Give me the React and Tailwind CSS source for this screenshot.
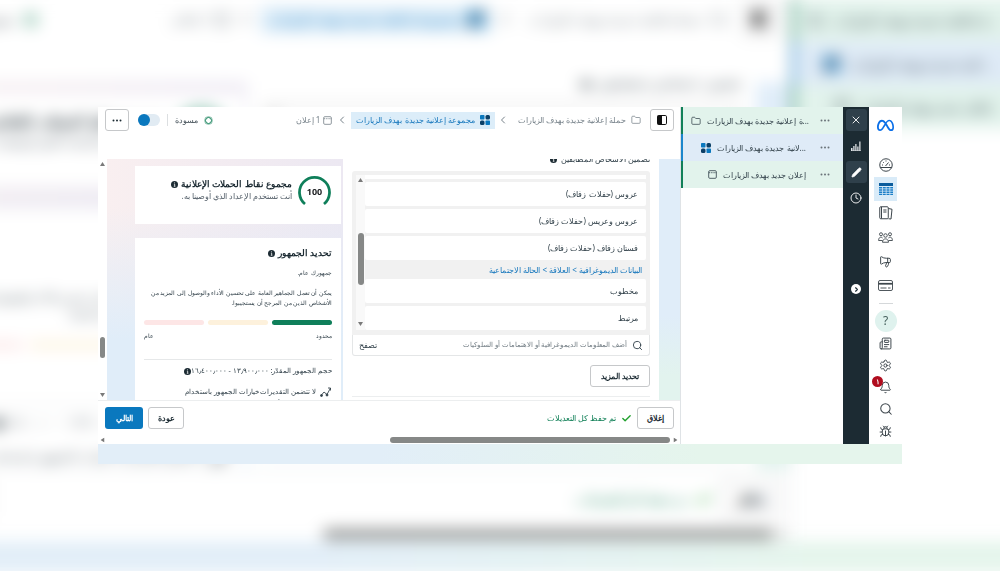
import { useId } from 'react'
import {
  Bell, Bug, Check, ChevronLeft, ChevronRight, Clock, CircleHelp, Folder,
  Megaphone, Newspaper, Pencil, Search, Settings, X,
} from 'lucide-react'
import { FaMeta } from 'react-icons/fa6'

const outlineBtn = 'flex items-center justify-center h-[22px] rounded-[3px] border border-[#c6c8ca] bg-white text-[8px] font-bold text-[#1c2b33]'

function InfoDot() {
  return (
    <svg viewBox="0 0 16 16" className="size-[7px] shrink-0">
      <circle cx="8" cy="8" r="8" fill="#1c2b33" />
      <path d="M8 3.2v1.9M6.6 7.2H8.4V12M6.4 12h3.6" stroke="#fff" strokeWidth="1.7" fill="none" />
    </svg>
  )
}

function AdSetIcon({ className }) {
  return (
    <svg viewBox="0 0 20 20" className={className}>
      <rect x="0" y="0" width="9" height="9" rx="1.5" fill="#0a78be" />
      <rect x="11" y="0" width="9" height="9" rx="3" fill="#0b3f66" />
      <rect x="0" y="11" width="9" height="9" rx="3" fill="#0b3f66" />
      <rect x="11" y="11" width="9" height="9" rx="1.5" fill="#0a78be" />
    </svg>
  )
}

function AdIcon({ className }) {
  return (
    <svg viewBox="0 0 20 20" className={className} fill="none" stroke="currentColor" strokeWidth="1.8">
      <rect x="1.5" y="1.5" width="17" height="17" rx="2.5" />
      <path d="M2 6h3M7 6h3M12 6h3M16.5 6h2" />
    </svg>
  )
}

function GaugeIcon() {
  return (
    <svg viewBox="0 0 28 28" className="size-[14px]" fill="none" stroke="#3c454b" strokeWidth="2">
      <circle cx="14" cy="14" r="12.5" />
      <path d="M2.5 19h23M13 16l6-7" />
      <path d="M6 14h2M8 8l1.5 1.5M14 5v2M20 14h2" />
    </svg>
  )
}

function TableIcon() {
  return (
    <svg viewBox="0 0 28 24" className="w-[14px] h-[12px]">
      <rect width="28" height="6" fill="#0b5c9c" />
      {[8, 12.5, 17, 21.5].map(y => (
        <g key={y} fill="#1c7fc7">
          <rect x="0" y={y} width="6" height="3" />
          <rect x="7.5" y={y} width="6" height="3" />
          <rect x="15" y={y} width="6" height="3" />
          <rect x="22.5" y={y} width="5.5" height="3" />
        </g>
      ))}
    </svg>
  )
}

function PagesIcon() {
  return (
    <svg viewBox="0 0 28 28" className="size-[14px]" fill="none" stroke="#3c454b" strokeWidth="2">
      <rect x="1.5" y="1.5" width="17" height="24" rx="2" />
      <path d="M5 2v23M8.5 8h6.5M8.5 12h6.5" />
      <path d="M19 5l7 1.5L24 26l-5-.5" />
    </svg>
  )
}

function PeopleIcon() {
  return (
    <svg viewBox="0 0 30 22" className="w-[15px] h-[11px]" fill="none" stroke="#3c454b" strokeWidth="1.8">
      <circle cx="15" cy="7" r="3.5" />
      <circle cx="6" cy="4.5" r="3" />
      <circle cx="24" cy="4.5" r="3" />
      <path d="M9 20.5c0-9 12-9 12 0zM9 17H1.2c0-7 5-8 8-5M21 17h7.8c0-7-5-8-8-5" />
    </svg>
  )
}

function CardIcon() {
  return (
    <svg viewBox="0 0 30 22" className="w-[15px] h-[11px]" fill="none" stroke="#3c454b" strokeWidth="1.8">
      <rect x="1" y="1" width="28" height="20" rx="3" />
      <path d="M1 7.5h28" strokeWidth="3.5" />
      <path d="M5 16h12M20 16h5" />
    </svg>
  )
}

function ChartIcon() {
  return (
    <svg viewBox="0 0 20 20" className="size-[10px]" fill="#dfe3e6">
      <path d="M0 14h3v5H0zM4.500 10H7v9H4.500zM8.500 6H11v13H8.500zM12.500 11H15v8h-2.500zM16.500 1H19v18h-2.500zM0 19h20v1H0z" />
    </svg>
  )
}

function TrendIcon() {
  return (
    <svg viewBox="0 0 24 24" className="size-[12px] shrink-0" fill="none" stroke="#33424b" strokeWidth="1.8">
      <path d="M3 18l5-6 6 5 7-13M16 4h5v5" />
      <circle cx="3" cy="19" r="2" fill="#33424b" />
      <circle cx="14" cy="18" r="2" fill="#33424b" />
    </svg>
  )
}

function NavRail() {
  const top = [
    ['لوحة المعلومات', <GaugeIcon />],
    ['الحملات', <TableIcon />],
    ['التقارير', <PagesIcon />],
    ['الجماهير', <PeopleIcon />],
    ['الإعلانات', <Megaphone className="size-[13px] -scale-x-100" strokeWidth={1.8} />],
    ['الفوترة', <CardIcon />],
  ]
  const bottom = [
    ['الأخبار', <Newspaper className="size-[13px]" strokeWidth={1.8} />],
    ['الإعدادات', <Settings className="size-[13px]" strokeWidth={1.8} />],
    ['الإشعارات', <Bell className="size-[13px]" strokeWidth={1.8} />],
    ['بحث', <Search className="size-[14px]" strokeWidth={1.8} />],
    ['الإبلاغ عن مشكلة', <Bug className="size-[13px]" strokeWidth={1.8} />],
  ]
  return (
    <nav className="flex flex-col items-center w-[33px] shrink-0 bg-white text-[#3c454b]">
      <a href="#" aria-label="Meta" className="flex items-center h-[36px] mb-[10px]">
        <FaMeta className="size-[17px] text-[#0a6fe8]" />
      </a>
      {top.map(([label, icon], i) => (
        <button key={label} aria-label={label} className={`flex items-center justify-center w-[23px] h-6 ${i === 1 ? 'bg-[#d9ebf8]' : ''}`}>
          {icon}
        </button>
      ))}
      <hr className="w-[14px] my-[6px] border-[#d5d8da]" />
      <button aria-label="مساعدة" className="size-[22px] rounded-full bg-[#dff2ee] text-[12px] leading-[22px] text-[#46615e]">?</button>
      {bottom.map(([label, icon], i) => (
        <button key={label} aria-label={label} className="relative flex items-center justify-center w-[23px] h-[22px]">
          {icon}
          {i === 2 && (
            <span className="absolute top-0 -left-[2px] size-[11px] rounded-full bg-[#b00c1e] text-[7px] leading-[11px] font-bold text-white">١</span>
          )}
        </button>
      ))}
    </nav>
  )
}

function ToolBar() {
  const tools = [
    ['إغلاق اللوحة', <X className="size-[12px]" strokeWidth={1.8} />, true],
    ['المخططات', <ChartIcon />, false],
    ['تعديل', <Pencil className="size-[11px]" fill="white" strokeWidth={1.5} />, true],
    ['السجل', <Clock className="size-[12px]" strokeWidth={1.8} />, false],
  ]
  return (
    <div className="flex flex-col items-center gap-1 w-[26px] shrink-0 pt-[2px] bg-[#1c2b33] text-white">
      {tools.map(([label, icon, on]) => (
        <button key={label} aria-label={label} className={`flex items-center justify-center w-[21px] h-[22px] rounded-[3px] ${on ? 'bg-[#2f404b]' : ''}`}>
          {icon}
        </button>
      ))}
      <button aria-label="توسيع" className="flex items-center justify-center size-[10px] mt-[71px] rounded-full bg-white text-[#1c2b33]">
        <ChevronRight className="size-[7px]" strokeWidth={4} />
      </button>
    </div>
  )
}

function Dots() {
  return (
    <svg viewBox="0 0 20 6" className="w-[10px] h-[3px]" fill="currentColor">
      <circle cx="3" cy="3" r="2" />
      <circle cx="10" cy="3" r="2" />
      <circle cx="17" cy="3" r="2" />
    </svg>
  )
}

function TreeRow({ label, icon, row, gap }) {
  return (
    <li className={`flex items-center h-[27px] pr-[13px] border-l-2 ${row}`}>
      <button aria-label="خيارات" className="w-[10px] text-[#6a7379]">
        <Dots />
      </button>
      <a href="#" className={`flex items-center gap-[6px] text-[8px] text-[#33424b] whitespace-nowrap ${gap}`}>
        {label}
        {icon}
      </a>
    </li>
  )
}

function Tree() {
  return (
    <aside className="w-[162px] shrink-0 bg-white">
      <ul>
        <TreeRow
          label="...ة إعلانية جديدة بهدف الزيارات"
          icon={<Folder className="size-[10px]" strokeWidth={1.8} />}
          row="bg-[#e2f3ec] border-[#128058]"
          gap="mr-[11px]"
        />
        <TreeRow
          label="...لانية جديدة بهدف الزيارات"
          icon={<AdSetIcon className="size-[10px]" />}
          row="bg-[#dfebf7] border-[#1b86cc]"
          gap="mr-[14px]"
        />
        <TreeRow
          label="إعلان جديد بهدف الزيارات"
          icon={<AdIcon className="size-[9px]" />}
          row="bg-[#e2f3ec] border-[#128058]"
          gap="mr-[14px]"
        />
      </ul>
    </aside>
  )
}

function Header() {
  const switchId = useId()
  return (
    <header className="flex items-start justify-between h-[52px] pr-[6px] pl-[7px] pt-[2px] text-[8px] text-[#77828a] whitespace-nowrap">
      <div className="flex items-center h-[22px]">
        <button aria-label="إظهار اللوحة" className={`${outlineBtn} w-6 ml-[9px]`}>
          <svg viewBox="0 0 20 20" className="size-[10px]">
            <rect x="1" y="1" width="18" height="18" rx="2.5" fill="none" stroke="#111" strokeWidth="2" />
            <path d="M1 1h9v18H1z" fill="#111" />
          </svg>
        </button>
        <a href="#" className="flex items-center gap-[5px]">
          <Folder className="size-[10px]" strokeWidth={1.8} />
          حملة إعلانية جديدة بهدف الزيارات
        </a>
        <ChevronLeft className="size-[12px] mr-[9px] ml-[2px]" />
        <a href="#" className="flex items-center gap-[5px] h-[17px] px-[5px] bg-[#dcedf9] text-[#1878bd]">
          <AdSetIcon className="size-[10px]" />
          مجموعة إعلانية جديدة بهدف الزيارات
        </a>
        <ChevronLeft className="size-[12px] mr-[3px] ml-[4px]" />
        <a href="#" className="flex items-center gap-[3px]">
          <AdIcon className="size-[9px]" />
          1 إعلان
        </a>
      </div>
      <div className="flex items-center h-[22px]">
        <span className="size-[7px] ml-[7px] rounded-full border border-[#128058] outline outline-[#128058]/40" />
        <span className="text-[#46525a]">مسودة</span>
        <span className="w-px h-3 mx-[7px] bg-[#dcdfe1]" />
        <label htmlFor={switchId} className="flex w-[22px] h-3 rounded-full bg-[#e1ebf3] ml-[9px]">
          <span className="sr-only">تشغيل</span>
          <input id={switchId} type="checkbox" role="switch" defaultChecked className="appearance-none size-3 mr-auto rounded-full bg-[#0a78be]" />
        </label>
        <button aria-label="المزيد" className={`${outlineBtn} w-6`}>
          <Dots />
        </button>
      </div>
    </header>
  )
}

function Arrow({ className = '' }) {
  return (
    <svg viewBox="0 0 10 8" className={`w-[5px] h-[4px] shrink-0 ${className}`}>
      <path d="M5 0l5 8H0z" fill="#7a7a7a" />
    </svg>
  )
}

function ListItem({ children }) {
  return <li className="h-6 px-2 rounded-[2px] bg-white text-[8px] leading-6 text-[#33424b]">{children}</li>
}

function TargetingForm() {
  const searchId = useId()
  return (
    <section className="flex-1 min-w-0 px-[9px] bg-white">
      <h3 className="flex items-center gap-1 h-[12px] -mt-[6px] mb-[6px] text-[8px] text-[#33424b]">
        تضمين الأشخاص المطابقين
        <InfoDot />
      </h3>
      <div className="flex h-[164px] px-1 pt-1 pb-[5px] rounded-t-[3px] bg-[#f1f1f1]">
        <ul className="flex-1 flex flex-col gap-[3px]">
          <li className="h-1 bg-white" />
          <ListItem>عروس (حفلات زفاف)</ListItem>
          <ListItem>عروس وعريس (حفلات زفاف)</ListItem>
          <ListItem>فستان زفاف (حفلات زفاف)</ListItem>
          <li className="h-[13px] px-1 text-[8px] leading-[13px] text-[#1878bd]">
            البيانات الديموغرافية &gt; العلاقة &gt; الحالة الاجتماعية
          </li>
          <ListItem>مخطوب</ListItem>
          <ListItem>مرتبط</ListItem>
        </ul>
        <div className="flex flex-col items-center w-[9px] pt-[3px] pb-1 bg-[#f9f9f9]">
          <Arrow />
          <span className="w-[6px] h-[52px] mt-[51px] mb-auto rounded-full bg-[#868887]" />
          <Arrow className="rotate-180" />
        </div>
      </div>
      <div className="flex items-center h-[21px] px-[6px] border border-t-0 border-[#e4e6e7] rounded-b-[3px]">
        <label htmlFor={searchId} className="shrink-0">
          <span className="sr-only">بحث</span>
          <Search className="size-[11px] text-[#33424b]" />
        </label>
        <input
          id={searchId}
          type="search"
          placeholder="أضف المعلومات الديموغرافية أو الاهتمامات أو السلوكيات"
          className="flex-1 min-w-0 px-[5px] text-[7px] placeholder:text-[#6f7a81] outline-none"
        />
        <button className="text-[8px] text-[#33424b]">تصفح</button>
      </div>
      <button className={`${outlineBtn} mt-[9px] px-[10px]`}>تحديد المزيد</button>
      <hr className="mt-[9px] border-[#eceeef]" />
    </section>
  )
}

function ScoreRing() {
  return (
    <div className="relative size-[33px] shrink-0">
      <svg viewBox="0 0 66 66" className="size-[33px]" fill="none">
        <path d="M14 56A30 30 0 1 1 52 56" stroke="#0f7f5a" strokeWidth="5.5" />
      </svg>
      <span className="absolute inset-0 text-center text-[9px] leading-[31px] font-bold text-[#1c1e21]">100</span>
    </div>
  )
}

function Insights() {
  return (
    <aside className="flex flex-col gap-[14px] w-[236px] shrink-0 pt-[7px] pr-[2px] pl-[28px] bg-[linear-gradient(to_bottom,transparent_20%,#e0edf9_75%),linear-gradient(to_right,#f9eff0,#ece8f2)]">
      <section className="flex shrink-0 items-start gap-[6px] h-[58px] px-[10px] pt-[10px] bg-white">
        <ScoreRing />
        <div>
          <h2 className="flex items-center gap-[3px] pt-[2px] text-[9px] leading-3 font-bold text-[#1c2b33]">
            مجموع نقاط الحملات الإعلانية
            <InfoDot />
          </h2>
          <p className="text-[8px] leading-3 text-[#55606a]">أنت تستخدم الإعداد الذي أوصينا به.</p>
        </div>
      </section>
      <section className="px-[9px] pt-[9px] bg-white text-[6px] leading-[10px] text-[#33424b]">
        <h2 className="flex items-center gap-[3px] text-[9px] leading-3 font-bold text-[#1c2b33]">
          تحديد الجمهور
          <InfoDot />
        </h2>
        <p className="mt-[9px]">جمهورك عام.</p>
        <p className="mt-[10px]">يمكن أن تعمل الجماهير العامة على تحسين الأداء والوصول إلى المزيد من الأشخاص الذين من المرجح أن يستجيبوا.</p>
        <div className="grid grid-cols-3 gap-1 h-[5px] mt-3">
          <span className="rounded-full bg-[#0f7f5a]" />
          <span className="rounded-full bg-[#fdf1dc]" />
          <span className="rounded-full bg-[#fde6e6]" />
        </div>
        <div className="flex justify-between mt-[6px]">
          <span>محدود</span>
          <span>عام</span>
        </div>
        <hr className="mt-[18px] border-[#e6e8e9]" />
        <p className="flex items-center mt-[6px] text-[7px] whitespace-nowrap">
          حجم الجمهور المقدّر: ١٣٫٩٠٠٫٠٠٠ - ١٦٫٤٠٠٫٠٠٠
          <InfoDot />
        </p>
        <div className="flex gap-1 mt-[10px] text-[7px] leading-3">
          <TrendIcon />
          <p>لا تتضمن التقديرات خيارات الجمهور باستخدام<br />ميزة جمهور أدفانتج+ وقد تختلف بشكل كبير.</p>
        </div>
      </section>
    </aside>
  )
}

function Footer() {
  return (
    <footer className="flex items-center justify-between h-[35px] pr-[6px] pl-[7px] border-t border-[#eceeef] text-[8px]">
      <div className="flex items-center gap-[5px]">
        <button className={`${outlineBtn} w-[37px]`}>إغلاق</button>
        <Check className="size-[11px] text-[#1fa02c]" strokeWidth={3} />
        <span className="text-[#128058]">تم حفظ كل التعديلات</span>
      </div>
      <div className="flex gap-[5px]">
        <button className={`${outlineBtn} w-9`}>عودة</button>
        <button className="w-[38px] h-[22px] rounded-[3px] bg-[#0a78be] font-bold text-white">التالي</button>
      </div>
    </footer>
  )
}

function Editor() {
  return (
    <main className="flex-1 min-w-0 bg-white border-r border-[#dfe3e6]">
      <Header />
      <div className="flex h-[241px] overflow-hidden">
        <div className="flex-1 min-w-0 flex pr-[21px] bg-[linear-gradient(to_bottom,#e0edf9_65%,#e2f3ee_90%)]">
          <TargetingForm />
          <Insights />
        </div>
        <div className="flex flex-col items-center w-[9px] shrink-0 py-[3px]">
          <Arrow />
          <span className="w-[5px] h-[21px] mt-auto mb-[35px] rounded-full bg-[#868887]" />
          <Arrow className="rotate-180" />
        </div>
      </div>
      <Footer />
      <div className="flex items-center h-[9px] px-[2px]">
        <Arrow className="rotate-90" />
        <span className="w-[280px] h-[6px] mr-[3px] ml-auto rounded-full bg-[#868887]" />
        <Arrow className="-rotate-90" />
      </div>
    </main>
  )
}

function AdsManager() {
  return (
    <div className="w-full">
      <div className="flex">
        <NavRail />
        <ToolBar />
        <Tree />
        <Editor />
      </div>
      <div className="h-5 bg-[linear-gradient(to_right,#e2eef8_35%,#e5f5ec_75%)]" />
    </div>
  )
}

export default function App() {
  return (
    <div dir="rtl" className="relative min-h-screen flex items-center overflow-hidden bg-white px-[98px] font-['Noto_Sans','Open_Sans',sans-serif]">
      {/* enlarged, blurred copy of the panel behind the sharp one */}
      <div inert aria-hidden="true" className="absolute inset-0 flex items-center px-[98px] scale-[1.61] blur-[5px]">
        <AdsManager />
      </div>
      <div className="relative w-full">
        <AdsManager />
      </div>
    </div>
  )
}
